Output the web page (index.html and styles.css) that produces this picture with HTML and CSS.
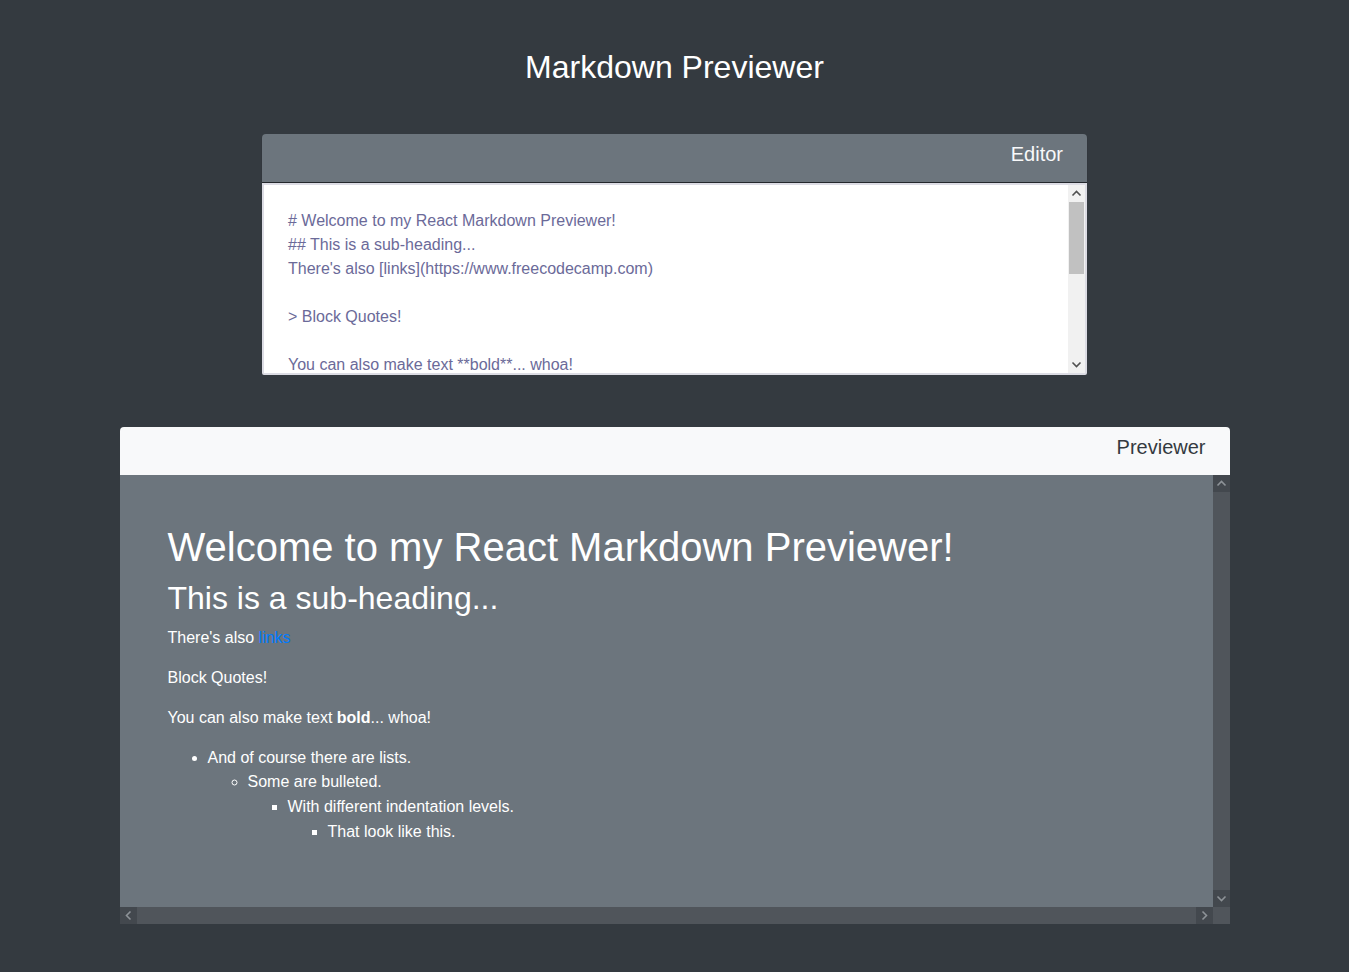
FILE: index.html
```html
<!DOCTYPE html>
<html lang="en">
<head>
<meta charset="utf-8">
<title>Markdown Previewer</title>
<link rel="stylesheet" href="styles.css">
</head>
<body>
<main class="app">
  <h1 class="title">Markdown Previewer</h1>
  <section class="editor-wrap">
    <div class="toolbar toolbar-dark">Editor</div>
    <div class="editor-box">
      <textarea class="editor" id="editor" spellcheck="false"># Welcome to my React Markdown Previewer!
## This is a sub-heading...
There's also [links](https://www.freecodecamp.com)

> Block Quotes!

You can also make text **bold**... whoa!

- And of course there are lists.
  - Some are bulleted.
     - With different indentation levels.
        - That look like this.
</textarea>
      <div class="vbar light">
        <div class="sb-btn"><svg viewBox="0 0 17 17" width="17" height="17"><polyline points="4.5,10.5 8.5,6.5 12.5,10.5"/></svg></div>
        <div class="sb-track"><div class="sb-thumb"></div></div>
        <div class="sb-btn"><svg viewBox="0 0 17 17" width="17" height="17"><polyline points="4.5,6.5 8.5,10.5 12.5,6.5"/></svg></div>
      </div>
    </div>
  </section>
  <section class="preview-wrap">
    <div class="toolbar toolbar-light">Previewer</div>
    <div class="preview-box">
      <div class="preview" id="preview">
        <h1>Welcome to my React Markdown Previewer!</h1>
        <h2>This is a sub-heading...</h2>
        <p>There's also <a href="#">links</a></p>
        <blockquote><p>Block Quotes!</p></blockquote>
        <p>You can also make text <strong>bold</strong>... whoa!</p>
        <ul>
          <li>And of course there are lists.
            <ul>
              <li>Some are bulleted.
                <ul>
                  <li>With different indentation levels.
                    <ul>
                      <li>That look like this.</li>
                    </ul>
                  </li>
                </ul>
              </li>
            </ul>
          </li>
        </ul>
      </div>
      <div class="vbar dark">
        <div class="sb-btn"><svg viewBox="0 0 17 17" width="17" height="17"><polyline points="4.5,10.5 8.5,6.5 12.5,10.5"/></svg></div>
        <div class="sb-track"></div>
        <div class="sb-btn"><svg viewBox="0 0 17 17" width="17" height="17"><polyline points="4.5,6.5 8.5,10.5 12.5,6.5"/></svg></div>
      </div>
      <div class="hbar dark">
        <div class="sb-btn"><svg viewBox="0 0 17 17" width="17" height="17"><polyline points="10.5,4.5 6.5,8.5 10.5,12.5"/></svg></div>
        <div class="sb-track"></div>
        <div class="sb-btn"><svg viewBox="0 0 17 17" width="17" height="17"><polyline points="6.5,4.5 10.5,8.5 6.5,12.5"/></svg></div>
      </div>
      <div class="sb-corner"></div>
    </div>
  </section>
</main>
</body>
</html>
```
FILE: styles.css
```css
html, body {
  margin: 0;
  padding: 0;
}
body {
  background: #343a40;
  font-family: "Liberation Sans", Arial, sans-serif;
  font-size: 16px;
  line-height: 1.5;
  color: #fff;
  min-height: 972px;
}
.app {
  display: flex;
  flex-direction: column;
  align-items: center;
  padding-top: 48px;
}
.title {
  margin: 0 0 48px;
  font-size: 32px;
  font-weight: 400;
  line-height: 1.2;
  color: #fff;
}
.editor-wrap {
  width: 825px;
  display: flex;
  flex-direction: column;
}
.toolbar {
  height: 48px;
  box-sizing: border-box;
  padding: 5px 24px 0;
  display: flex;
  align-items: flex-start;
  justify-content: flex-end;
  font-size: 20px;
  line-height: 30px;
  border-radius: 4px 4px 0 0;
}
.toolbar-dark {
  background: #6c757d;
  color: #f8f9fa;
  box-shadow: 0 1px 1px rgba(0,0,0,0.35);
}
.toolbar-light {
  background: #f8f9fa;
  color: #343a40;
}
.editor-box {
  margin-top: 1px;
  height: 192px;
  box-sizing: border-box;
  border: 2px solid #dcdce4;
  border-radius: 0 0 2px 2px;
  background: #fff;
  display: grid;
  grid-template-columns: 1fr 17px;
}
.editor {
  display: block;
  margin: 0;
  width: 100%;
  height: 100%;
  box-sizing: border-box;
  border: 0;
  padding: 24px 24px 0 24px;
  font-family: "Liberation Sans", Arial, sans-serif;
  font-size: 16px;
  line-height: 24px;
  color: #6b6a99;
  background: #fff;
  resize: none;
  overflow: hidden;
  outline: none;
}
.vbar {
  display: grid;
  grid-template-rows: 17px 1fr 17px;
}
.hbar {
  display: grid;
  grid-template-columns: 17px 1fr 17px;
  height: 17px;
}
.sb-btn svg {
  display: block;
  fill: none;
  stroke-width: 1.6;
}
.light {
  background: #f1f1f1;
}
.light .sb-btn svg {
  stroke: #505050;
}
.light .sb-track {
  padding: 0 1px;
}
.sb-thumb {
  height: 72px;
  background: #c1c1c1;
}
.dark .sb-track {
  background: #50555b;
}
.dark .sb-btn {
  background: #43484e;
}
.dark .sb-btn svg {
  stroke: #8e9398;
}
.sb-corner {
  background: #50555b;
}
.preview-wrap {
  width: 1110px;
  margin-top: 52px;
  display: flex;
  flex-direction: column;
}
.preview-box {
  display: grid;
  grid-template-columns: 1fr 17px;
  grid-template-rows: auto 17px;
  background: #6c757d;
}
.preview {
  padding: 48px 48px 47px;
  color: #fff;
  min-width: 0;
}
.preview h1 {
  margin: 0 0 8px;
  font-size: 40px;
  font-weight: 400;
  line-height: 1.2;
}
.preview h2 {
  margin: 0 0 8px;
  font-size: 32px;
  font-weight: 400;
  line-height: 1.2;
}
.preview p {
  margin: 0 0 16px;
}
.preview blockquote {
  margin: 0 0 16px;
}
.preview a {
  color: #007bff;
  text-decoration: none;
}
.preview strong {
  font-weight: 700;
}
.preview ul {
  margin: 0 0 16px;
  padding-left: 40px;
}
.preview li {
  line-height: 24.67px;
}
.preview ul ul {
  margin-bottom: 0;
}
```
